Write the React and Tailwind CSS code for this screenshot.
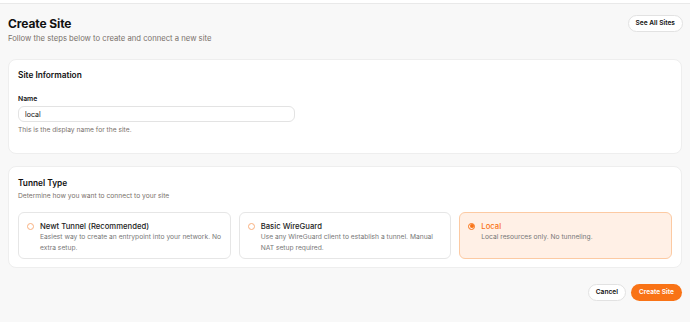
import React, { useState } from "react";

const options = [
  {
    id: "newt",
    title: "Newt Tunnel (Recommended)",
    desc: "Easiest way to create an entrypoint into your network. No extra setup.",
  },
  {
    id: "wireguard",
    title: "Basic WireGuard",
    desc: "Use any WireGuard client to establish a tunnel. Manual NAT setup required.",
  },
  {
    id: "local",
    title: "Local",
    desc: "Local resources only. No tunneling.",
  },
];

const App = () => {
  const [name, setName] = useState("local");
  const [type, setType] = useState("local");

  return (
    <div className="w-[690px] h-[322px] bg-[#f8f8f8] font-['Inter',sans-serif] text-[#111] overflow-hidden">
      <div className="h-[4px] bg-white border-b border-[#e9e9e9]" />

      {/* header */}
      <div className="h-[55px] flex items-start justify-between px-2 pt-[12px]">
        <div>
          <h1 className="text-[12px] leading-[15px] font-bold tracking-[-0.1px]">Create Site</h1>
          <p className="mt-[1.5px] text-[7.7px] leading-[11px] text-stone-500">
            Follow the steps below to create and connect a new site
          </p>
        </div>
        <button className="-mt-[1px] mr-[-1px] h-[17px] px-[7px] rounded-full border border-[#e2e2e2] bg-white text-[6.6px] font-semibold">
          See All Sites
        </button>
      </div>

      {/* site info */}
      <div className="mx-2 h-[95px] bg-white rounded-[8px] border border-[#eeeeee] px-[9px] pt-[9px]">
        <h2 className="text-[8.3px] leading-[12px] font-semibold">Site Information</h2>
        <label className="block mt-[13px] text-[6.8px] leading-[10px] font-semibold">Name</label>
        <input
          value={name}
          onChange={(e) => setName(e.target.value)}
          className="block mt-[2px] w-[277px] h-[16px] rounded-[6px] border border-[#e3e3e3] px-[6px] text-[7px] outline-none"
        />
        <p className="mt-[3px] text-[6.7px] leading-[10px] text-stone-500">
          This is the display name for the site.
        </p>
      </div>

      {/* tunnel type */}
      <div className="mx-2 mt-[12px] h-[102px] bg-white rounded-[8px] border border-[#eeeeee] px-[9px] pt-[10px]">
        <h2 className="text-[8.3px] leading-[12px] font-semibold">Tunnel Type</h2>
        <p className="mt-[2px] text-[6.7px] leading-[10px] text-stone-500">
          Determine how you want to connect to your site
        </p>
        <div className="mt-[11px] grid grid-cols-3 gap-[8px]">
          {options.map((o) => {
            const active = type === o.id;
            return (
              <button
                key={o.id}
                onClick={() => setType(o.id)}
                className={
                  active
                    ? "h-[47px] rounded-[6px] border border-[#fccaa3] bg-[#fff0e6] flex items-start gap-[6px] pl-[8px] pr-[6px] pt-[7.5px] text-left"
                    : "h-[47px] rounded-[6px] border border-[#e6e6e6] bg-white flex items-start gap-[6px] pl-[8px] pr-[6px] pt-[7.5px] text-left"
                }
              >
                <span
                  className={
                    active
                      ? "mt-[2px] w-[7px] h-[7px] shrink-0 rounded-full border border-[#f97316] flex items-center justify-center"
                      : "mt-[2px] w-[7px] h-[7px] shrink-0 rounded-full border border-[#f9b07e]"
                  }
                >
                  {active && <span className="w-[3.5px] h-[3.5px] rounded-full bg-[#f97316]" />}
                </span>
                <span className="flex-1">
                  <span
                    className={
                      active
                        ? "block text-[7.7px] leading-[11px] font-medium text-[#f97316]"
                        : "block text-[7.7px] leading-[11px] font-medium text-[#222]"
                    }
                  >
                    {o.title}
                  </span>
                  <span className="block text-[6.7px] leading-[11px] text-[#777]">{o.desc}</span>
                </span>
              </button>
            );
          })}
        </div>
      </div>

      {/* actions */}
      <div className="flex justify-end gap-[5px] px-2 mt-[16px]">
        <button className="h-[17px] px-[7px] rounded-full border border-[#e2e2e2] bg-white text-[6.6px] font-semibold">
          Cancel
        </button>
        <button className="h-[17px] px-[8px] rounded-full bg-[#f97316] text-white text-[6.6px] font-semibold">
          Create Site
        </button>
      </div>
    </div>
  );
};

export default App;
